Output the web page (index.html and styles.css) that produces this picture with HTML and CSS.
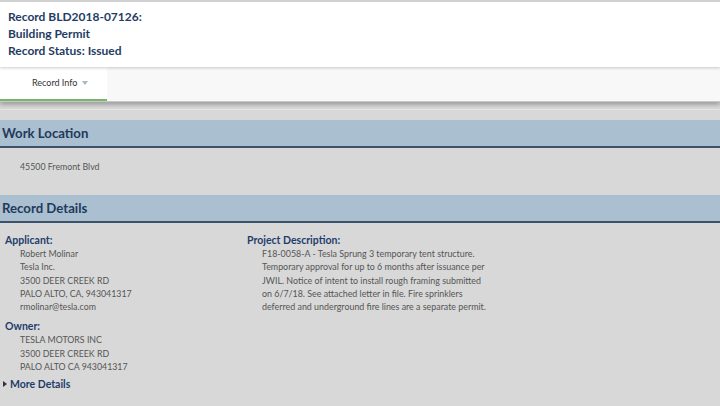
FILE: index.html
```html
<!DOCTYPE html>
<html lang="en">
  <head>
    <meta charset="UTF-8" />
    <title>Record BLD2018-07126</title>
    <link rel="stylesheet" href="styles.css">
  </head>
  <body>
    <div class="page-header">
      <h1 class="record-title">
        <span>Record BLD2018-07126:</span>
        <span>Building Permit</span>
        <span>Record Status: Issued</span>
      </h1>
    </div>
    <div class="tab-bar">
      <div class="tab active">Record Info <span class="caret"></span></div>
    </div>
    <div class="content">
      <div class="section-title">Work Location</div>
      <div class="section-body location">45500 Fremont Blvd</div>

      <div class="section-title">Record Details</div>
      <div class="details">
        <div class="col">
          <div class="label">Applicant:</div>
          <div class="lines">
            <span>Robert Molinar</span>
            <span>Tesla Inc.</span>
            <span>3500 DEER CREEK RD</span>
            <span>PALO ALTO, CA, 943041317</span>
            <span>rmolinar@tesla.com</span>
          </div>
          <div class="label">Owner:</div>
          <div class="lines">
            <span>TESLA MOTORS INC</span>
            <span>3500 DEER CREEK RD</span>
            <span>PALO ALTO CA 943041317</span>
          </div>
          <div class="more"><span class="arrow"></span>More Details</div>
        </div>
        <div class="col">
          <div class="label">Project Description:</div>
          <p class="desc">F18-0058-A - Tesla Sprung 3 temporary tent structure.<br>Temporary approval for up to 6 months after issuance per<br>JWIL. Notice of intent to install rough framing submitted<br>on 6/7/18. See attached letter in file. Fire sprinklers<br>deferred and underground fire lines are a separate permit.</p>
        </div>
      </div>
    </div>
  </body>
</html>
```
FILE: styles.css
```css
body {
  margin: 0;
  font-family: Lato, "Open Sans", sans-serif;
  background-color: #d8d8d8;
  height: 406px;
  overflow: hidden;
}
/* Header */
.page-header {
  background-color: #fff;
  border-top: 2px solid #d0d0d0;
  height: 65px;
  box-shadow: 0px 1px 3px rgba(0, 0, 0, 0.2);
  position: relative;
}
.record-title {
  margin: 0;
  padding: 6px 8px 0;
  font-size: 12px;
  font-weight: 700;
  color: #1f3d63;
  line-height: 17px;
}
.record-title span {
  display: block;
}
/* Tabs */
.tab-bar {
  background-color: #f8f8f8;
  height: 34px;
  display: flex;
  box-shadow: 0px 3px 4px rgba(0, 0, 0, 0.25);
  border-bottom: 1px solid #c8c8c8;
}
.tab {
  width: 107px;
  box-sizing: border-box;
  padding-left: 32px;
  font-size: 9px;
  color: #333;
  line-height: 32px;
}
.tab.active {
  background-color: #fff;
  border-bottom: 2px solid #7ab36a;
}
.caret {
  display: inline-block;
  border-left: 3px solid transparent;
  border-right: 3px solid transparent;
  border-top: 4px solid #a8b8c0;
  margin-left: 2px;
  vertical-align: 1px;
}
/* Content */
.content {
  margin-top: 7px;
  border-top: 1px solid #e4e4e4;
  padding-top: 10px;
}
.section-title {
  background-color: #aabfcf;
  border-bottom: 2px solid #3c526a;
  color: #1f3a5c;
  font-size: 13.2px;
  font-weight: 700;
  height: 26px;
  line-height: 26px;
  padding-left: 2px;
}
.section-body {
  font-size: 8.8px;
  color: #555;
}
.location {
  padding: 12px 0 21px 20px;
  line-height: 14px;
}
.details {
  display: flex;
  padding-top: 11px;
}
.col:first-child {
  width: 247px;
}
.label {
  font-size: 10.5px;
  font-weight: 700;
  color: #1f3d6b;
  line-height: 13px;
  padding-left: 5px;
}
.col:last-child .label {
  padding-left: 0;
}
.lines {
  padding-left: 20px;
  font-size: 8.8px;
  color: #555;
  line-height: 13.3px;
  margin-bottom: 7px;
}
.lines span {
  display: block;
}
.desc {
  margin: 0;
  padding-left: 15px;
  font-size: 8.9px;
  color: #555;
  line-height: 13.3px;
}
.more {
  font-size: 10.5px;
  font-weight: 700;
  color: #1f3d6b;
  line-height: 14px;
  margin-top: -3px;
  padding-left: 3px;
}
.arrow {
  display: inline-block;
  border-top: 3px solid transparent;
  border-bottom: 3px solid transparent;
  border-left: 4px solid #333;
  margin-right: 3px;
  vertical-align: 1px;
}
```
